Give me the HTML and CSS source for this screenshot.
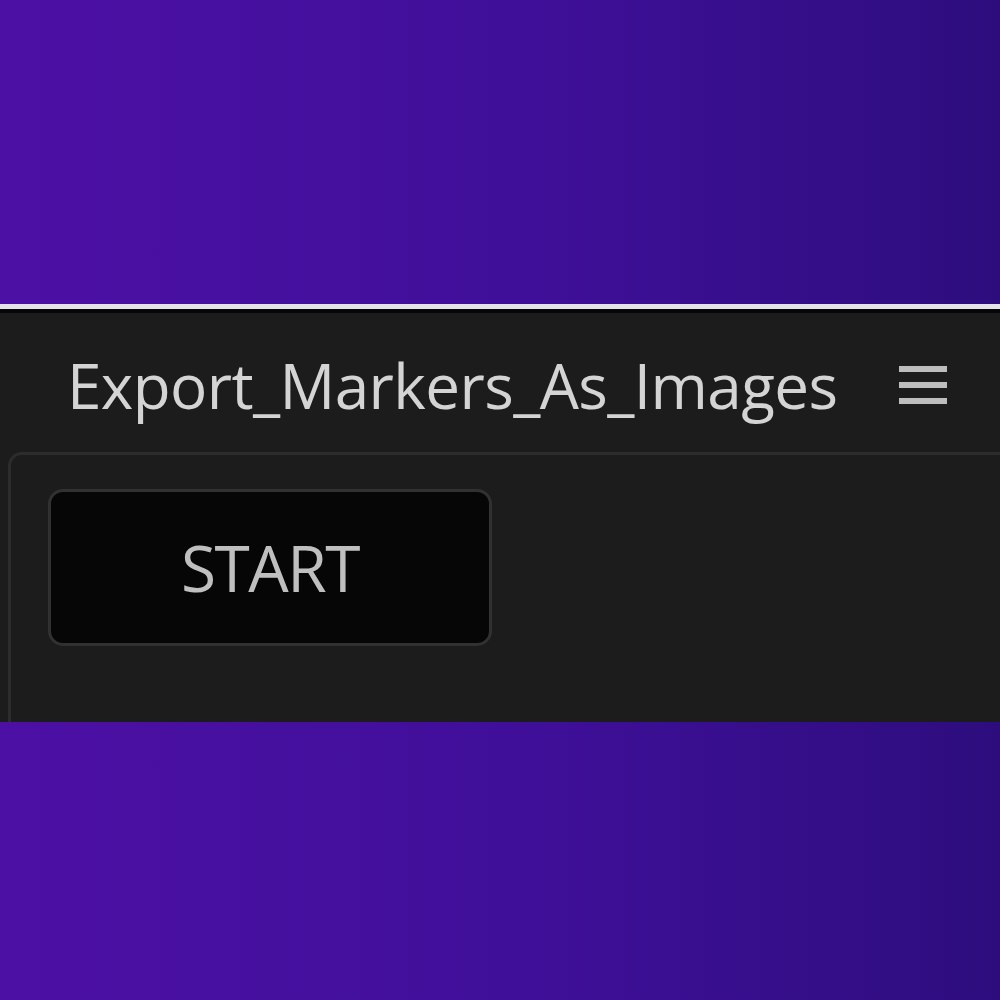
FILE: index.html
```html
<!DOCTYPE html>
<html>
<head>
<meta charset="utf-8">
<link rel="stylesheet" href="styles.css">
</head>
<body>
<div class="top-band"></div>
<div class="window">
  <div class="titlebar">
    <span class="title">Export_Markers_As_Images</span>
    <span class="menu" aria-label="menu"><i></i><i></i><i></i></span>
  </div>
  <div class="content">
    <button class="start">START</button>
  </div>
</div>
</body>
</html>
```

FILE: styles.css
```css
html, body {
  margin: 0;
  padding: 0;
  width: 1000px;
  height: 1000px;
  overflow: hidden;
}
body {
  background: linear-gradient(90deg, #4c10a4 0%, #400f9a 50%, #2d0d7e 100%);
  font-family: "Open Sans", "Noto Sans", sans-serif;
}
.top-band {
  height: 304px;
}
.window {
  height: 418px;
  background: #1c1c1c;
  border-top: 5px solid #e4e4e8;
  box-shadow: inset 0 4px 0 #060606;
  box-sizing: border-box;
  display: flex;
  flex-direction: column;
}
.titlebar {
  height: 143px;
  display: flex;
  align-items: center;
  padding: 8px 0 0 67px;
  box-sizing: border-box;
}
.title {
  color: #d4d4d4;
  font-size: 62px;
  font-weight: 500;
  letter-spacing: -0.6px;
  line-height: 1;
}
.menu {
  margin-left: 62px;
  width: 48px;
  display: flex;
  flex-direction: column;
  gap: 10px;
}
.menu i {
  display: block;
  height: 6px;
  background: #bdbdbd;
}
.content {
  flex: 1;
  margin-left: 8px;
  border-top: 3px solid #2c2c2c;
  border-left: 3px solid #2c2c2c;
  border-top-left-radius: 14px;
  background: #1c1c1c;
  padding: 34px 0 0 37px;
}
.start {
  width: 444px;
  height: 157px;
  background: #060606;
  border: 3px solid #313131;
  border-radius: 15px;
  color: #bfbfbf;
  font-family: "Open Sans", "Noto Sans", sans-serif;
  font-size: 64px;
  font-weight: 500;
  letter-spacing: -1.5px;
  padding: 0;
}
```
